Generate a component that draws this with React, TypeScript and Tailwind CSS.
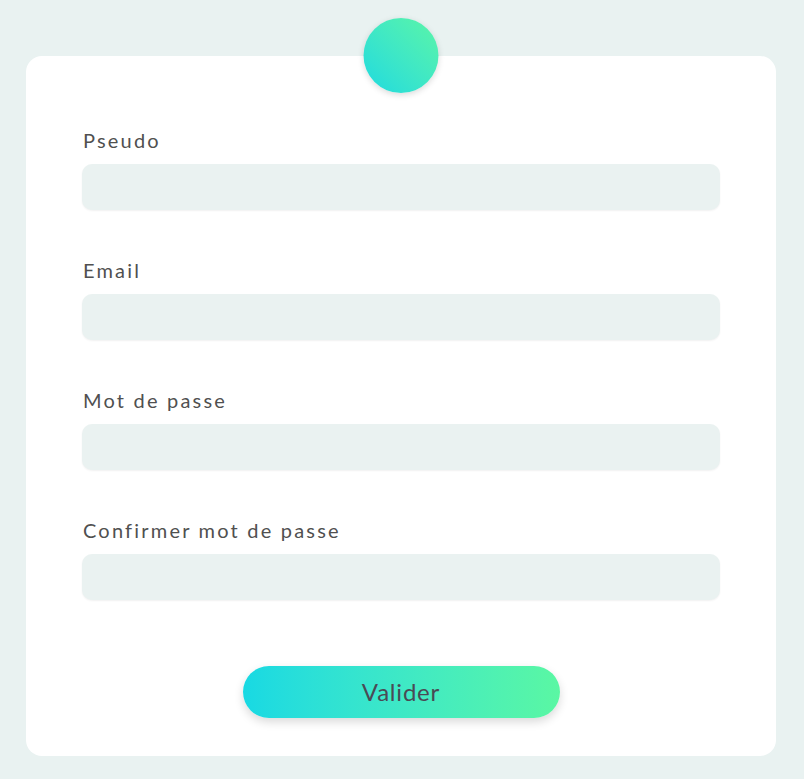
export default function App() {
  const fields = ["Pseudo", "Email", "Mot de passe", "Confirmer mot de passe"];

  return (
    <div className="min-h-[779px] w-full bg-[#e9f2f1] pl-[26px] pr-[28px] pt-[18px] pb-[23px] font-['Lato','Open_Sans',sans-serif]">
      <div className="relative flex flex-col pt-[38px]">
        {/* logo */}
        <div className="absolute left-1/2 top-0 z-10 h-[75px] w-[75px] -translate-x-1/2 rounded-full bg-gradient-to-tr from-[#1cdadf] to-[#5af5a6] shadow-[0_2px_6px_rgba(0,0,0,0.15)]" />

        <div className="rounded-[16px] bg-white px-[56px] pt-[71px] pb-[38px]">
          <div className="flex flex-col gap-[47px]">
            {fields.map((f) => (
              <div key={f} className="flex flex-col">
                <label className="ml-px text-[20px] leading-[27px] tracking-[2.2px] text-[#505050]">
                  {f}
                </label>
                <input
                  type="text"
                  className="mt-[10px] h-[46px] w-full rounded-[10px] bg-[#eaf2f1] shadow-[0_1px_2px_rgba(0,0,0,0.06)] outline-none"
                />
              </div>
            ))}
          </div>

          <div className="mt-[66px] flex justify-center">
            <button className="h-[52px] w-[317px] rounded-full bg-gradient-to-r from-[#18d9e3] to-[#5af7a3] text-[24px] tracking-[0.8px] text-[#4a4a55] shadow-[0_4px_10px_rgba(0,0,0,0.15)]">
              Valider
            </button>
          </div>
        </div>
      </div>
    </div>
  );
}
